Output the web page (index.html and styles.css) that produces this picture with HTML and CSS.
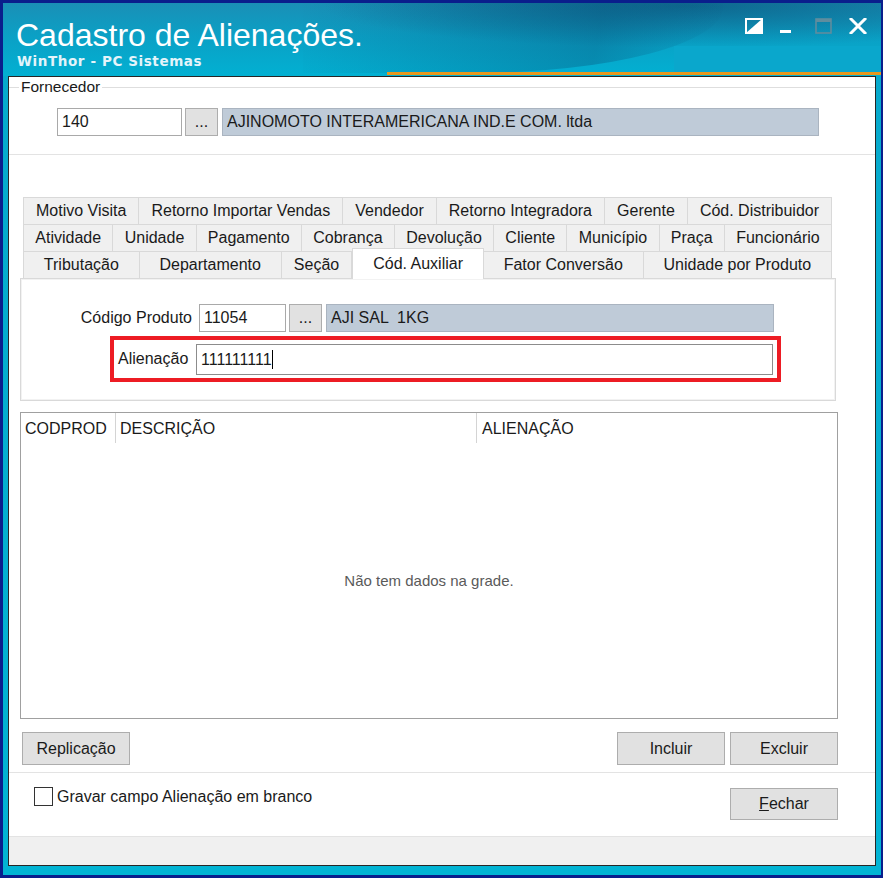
FILE: index.html
```html
<!DOCTYPE html>
<html lang="pt-BR">
<head>
<meta charset="utf-8">
<title>Cadastro de Alienações</title>
<link rel="stylesheet" href="styles.css">
</head>
<body>
<div class="window">
  <header class="titlebar">
    <div class="swoosh"></div>
    <div class="accent"></div>
    <div class="titles">
      <h1 class="title">Cadastro de Alienações.</h1>
      <p class="subtitle">WinThor - PC Sistemas</p>
    </div>
    <div class="controls">
      <svg class="ctl ctl-help" width="18" height="16" viewBox="0 0 18 16">
        <rect x="1" y="1" width="16" height="14" fill="none" stroke="#fff" stroke-width="2"/>
        <polygon points="1,15 17,1 17,15" fill="#fff"/>
      </svg>
      <svg class="ctl ctl-min" width="11" height="16" viewBox="0 0 11 16">
        <rect x="0" y="12" width="11" height="3" fill="#fff"/>
      </svg>
      <svg class="ctl ctl-max" width="17" height="16" viewBox="0 0 17 16">
        <rect x="1" y="1" width="15" height="14" fill="none" stroke="#5f8d9e" stroke-width="1.6"/>
        <rect x="1" y="1" width="15" height="3" fill="#5f8d9e"/>
      </svg>
      <svg class="ctl ctl-close" width="18" height="16" viewBox="0 0 18 16">
        <path d="M2 1 L16 15 M16 1 L2 15" stroke="#fff" stroke-width="3" stroke-linecap="square"/>
      </svg>
    </div>
  </header>

  <main class="client">
    <fieldset class="supplier">
      <legend class="legend">Fornecedor</legend>
      <div class="lookup supplier-row">
        <div class="edit code-wide">140</div>
        <button class="btn dots">...</button>
        <div class="edit readonly name-wide">AJINOMOTO INTERAMERICANA IND.E COM. ltda</div>
      </div>
    </fieldset>

    <section class="pages">
      <div class="tabrow">
        <span class="tab">Motivo Visita</span>
        <span class="tab">Retorno Importar Vendas</span>
        <span class="tab">Vendedor</span>
        <span class="tab">Retorno Integradora</span>
        <span class="tab">Gerente</span>
        <span class="tab">Cód. Distribuidor</span>
      </div>
      <div class="tabrow">
        <span class="tab">Atividade</span>
        <span class="tab">Unidade</span>
        <span class="tab">Pagamento</span>
        <span class="tab">Cobrança</span>
        <span class="tab">Devolução</span>
        <span class="tab">Cliente</span>
        <span class="tab">Município</span>
        <span class="tab">Praça</span>
        <span class="tab">Funcionário</span>
      </div>
      <div class="tabrow">
        <span class="tab">Tributação</span>
        <span class="tab">Departamento</span>
        <span class="tab compact">Seção</span>
        <span class="tab active">Cód. Auxiliar</span>
        <span class="tab">Fator Conversão</span>
        <span class="tab">Unidade por Produto</span>
      </div>
      <div class="page">
        <div class="lookup product-row">
          <label class="label label-right">Código Produto</label>
          <div class="edit code">11054</div>
          <button class="btn dots">...</button>
          <div class="edit readonly name">AJI SAL  1KG</div>
        </div>
        <div class="highlight">
          <label class="label">Alienação</label>
          <div class="edit value">111111111<span class="caret"></span></div>
        </div>
      </div>
    </section>

    <section class="grid">
      <div class="grid-head">
        <span class="col c1">CODPROD</span>
        <span class="col c2">DESCRIÇÃO</span>
        <span class="col c3">ALIENAÇÃO</span>
      </div>
      <div class="grid-body">Não tem dados na grade.</div>
    </section>

    <div class="actions">
      <button class="btn action">Replicação</button>
      <span class="spacer"></span>
      <button class="btn action">Incluir</button>
      <button class="btn action">Excluir</button>
    </div>

    <div class="footer">
      <label class="check"><span class="box"></span>Gravar campo Alienação em branco</label>
      <button class="btn action close"><u>F</u>echar</button>
    </div>

    <div class="statusbar"></div>
  </main>
</div>
</body>
</html>
```

FILE: styles.css
```css
* { box-sizing: border-box; }

html, body {
  margin: 0;
  padding: 0;
  background: #0a1e8c;
}

body {
  font-family: "Liberation Sans", Arial, sans-serif;
  font-size: 16px;
  color: #1a1a1a;
}

.window {
  width: 883px;
  height: 878px;
  border: 3px solid #0a1e8c;
  border-right-width: 2px;
  background: linear-gradient(180deg, #07a9cc 0%, #02b4d4 100%);
  display: flex;
  flex-direction: column;
}

/* ---------- title bar ---------- */
.titlebar {
  position: relative;
  height: 73px;
  flex: none;
  display: flex;
  justify-content: space-between;
  background:
    radial-gradient(ellipse 520px 60px at 78% 4%, rgba(4, 70, 110, 0.55), rgba(4, 70, 110, 0) 70%),
    linear-gradient(180deg, #1a8fb6 0%, #0ba0c5 45%, #02b0d2 100%);
  overflow: hidden;
}

.swoosh {
  position: absolute;
  left: 300px;
  top: -40px;
  width: 420px;
  height: 110px;
  border-radius: 0 0 60% 0;
  background: linear-gradient(100deg, rgba(8, 80, 120, 0) 0%, rgba(8, 80, 120, 0.35) 70%, rgba(8, 80, 120, 0) 100%);
}

.accent {
  position: absolute;
  right: 0;
  bottom: 1px;
  width: 494px;
  height: 29px;
  background: linear-gradient(90deg, rgba(0, 0, 0, 0) 0%, rgba(0, 0, 0, 0) 58%, #0aa7cc 58%, #0aa7cc 100%);
  border-bottom: 3px solid #e8971e;
}

.titles {
  position: relative;
  padding: 14px 0 0 13px;
}

.title {
  margin: 0;
  font-family: "Liberation Sans", Arial, sans-serif;
  font-weight: normal;
  font-size: 32px;
  line-height: 36px;
  color: #ffffff;
}

.subtitle {
  margin: 0 0 0 1px;
  font-family: "DejaVu Sans", Verdana, sans-serif;
  font-weight: bold;
  font-size: 13.5px;
  line-height: 16px;
  letter-spacing: 0.6px;
  color: #e4f4fa;
}

.controls {
  position: relative;
  display: flex;
  align-items: flex-start;
  padding: 15px 14px 0 0;
}

.ctl { display: block; }
.ctl-min { margin-left: 17px; }
.ctl-max { margin-left: 24px; }
.ctl-close { margin-left: 17px; }

/* ---------- client area ---------- */
.client {
  flex: 1;
  margin: 0 5px 9px 5px;
  background: #ffffff;
  border: 1px solid #262626;
  display: flex;
  flex-direction: column;
}

.supplier {
  margin: 0;
  padding: 0 0 18px 0;
  border: none;
  border-top: 1px solid #dedede;
  border-bottom: 1px solid #e3e3e3;
  height: 78px;
}

.legend {
  margin-left: 10px;
  padding: 0 2px;
  font-size: 15.5px;
  line-height: 20px;
}

.lookup {
  display: flex;
  align-items: center;
}

.supplier-row {
  margin: 11px 0 0 48px;
}

.edit {
  height: 28px;
  border: 1px solid #a9a9a9;
  background: #ffffff;
  padding: 0 4px;
  line-height: 26px;
  font-size: 16px;
  white-space: pre;
}

.readonly {
  background: #bfcbd8;
  border-color: #aab4c0;
}

.code-wide { width: 125px; }
.name-wide { width: 597px; margin-left: 4px; }

.btn {
  font-family: inherit;
  font-size: 16px;
  color: #1a1a1a;
  background: #e1e1e1;
  border: 1px solid #adadad;
  padding: 0;
  cursor: default;
}

.dots {
  width: 33px;
  height: 28px;
  margin-left: 3px;
  line-height: 22px;
}

/* ---------- tabs ---------- */
.pages {
  margin: 42px 0 0 11px;
  width: 816px;
}

.tabrow {
  display: flex;
  margin: 0 4px 0 3px;
  height: 27px;
}

.tab {
  flex: 1 1 auto;
  padding: 0 8px;
  text-align: center;
  line-height: 26px;
  background: #f0f0f0;
  border: 1px solid #d9d9d9;
  border-left: none;
  border-bottom: none;
  white-space: nowrap;
}

.tab:first-child { border-left: 1px solid #d9d9d9; }

.tab.compact { flex-grow: 0.35; }

.tab.active {
  position: relative;
  z-index: 1;
  background: #ffffff;
  margin-top: -3px;
  height: 31px;
  line-height: 29px;
  border-left: 1px solid #d9d9d9;
}

.page {
  border: 1px solid #d9d9d9;
  box-shadow: inset 0 0 0 1px #f2f2f2;
  height: 123px;
  padding: 25px 0 0 0;
}

.label {
  font-size: 16px;
  white-space: nowrap;
}

.label-right {
  width: 132px;
  text-align: right;
  margin: 0 7px 0 39px;
}

.code { width: 87px; }
.name { width: 448px; margin-left: 4px; }

.highlight {
  display: flex;
  align-items: center;
  margin: 4px 0 0 89px;
  width: 671px;
  height: 46px;
  border: 4px solid #ed1c24;
  padding: 0 4px 0 4px;
}

.highlight .label {
  width: 78px;
}

.value {
  flex: 1;
  height: 31px;
  line-height: 29px;
  border-color: #8c8c8c;
}

.caret {
  display: inline-block;
  width: 1px;
  height: 19px;
  background: #000;
  vertical-align: -4px;
}

/* ---------- grid ---------- */
.grid {
  margin: 11px 0 0 11px;
  width: 818px;
  height: 307px;
  border: 1px solid #a0a0a0;
  display: flex;
  flex-direction: column;
}

.grid-head {
  display: flex;
  height: 30px;
}

.col {
  line-height: 31px;
  padding-left: 4px;
  border-right: 1px solid #d4d4d4;
  font-size: 16px;
}

.c1 { width: 95px; }
.c2 { width: 361px; }
.c3 { border-right: none; padding-left: 5px; }

.grid-body {
  flex: 1;
  display: flex;
  align-items: center;
  justify-content: center;
  color: #5a5a5a;
  font-size: 15px;
}

/* ---------- buttons ---------- */
.actions {
  display: flex;
  gap: 5px;
  margin-top: 13px;
  padding: 0 37px 0 13px;
  height: 41px;
  border-bottom: 1px solid #e3e3e3;
}

.action {
  width: 108px;
  height: 33px;
}

.spacer { flex: 1; }

.footer {
  display: flex;
  justify-content: space-between;
  align-items: flex-start;
  padding: 14px 37px 0 25px;
  height: 63px;
}

.check {
  display: flex;
  align-items: center;
  gap: 4px;
  font-size: 16px;
  line-height: 18px;
}

.box {
  width: 19px;
  height: 19px;
  border: 1px solid #333333;
  background: #ffffff;
}

.close {
  height: 32px;
  margin-top: 1px;
}

.statusbar {
  flex: 1;
  background: #f0f0f0;
  border-top: 1px solid #e3e3e3;
}
```
